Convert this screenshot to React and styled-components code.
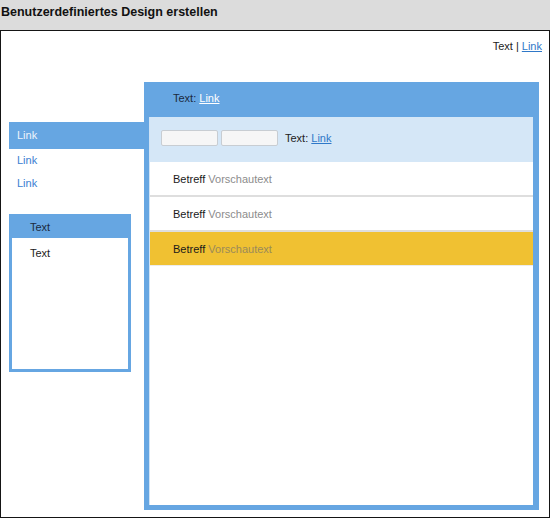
import styled, { createGlobalStyle } from 'styled-components';

/* Farben */
const blue = '#66a6e2';
const lightBlue = '#d5e7f7';
const yellow = '#f0c132';
const linkBlue = '#2f78c8';

const GlobalStyle = createGlobalStyle`
  html, body {
    margin: 0;
    padding: 0;
    background: #ffffff;
  }
  body {
    font-family: "Liberation Sans", Arial, sans-serif;
    font-size: 11px;
    color: #222222;
  }
`;

// Titelleiste
const TitleBar = styled.div`
  height: 30px;
  box-sizing: border-box;
  padding: 5px 0 0 1px;
  background: #dcdcdc;
  font-size: 12.5px;
  font-weight: bold;
  color: #111111;
`;

// Rahmen der Vorschau
const Frame = styled.div`
  box-sizing: border-box;
  width: 550px;
  height: 488px;
  border: 1px solid #151515;
  display: flex;
  flex-direction: column;
`;

const TopLinks = styled.div`
  height: 51px;
  box-sizing: border-box;
  padding: 9px 7px 0 0;
  text-align: right;
`;

const A = styled.a`
  color: ${(p) => p.$color || linkBlue};
  text-decoration: underline;
  cursor: pointer;
`;

const Body = styled.div`
  display: flex;
  align-items: flex-start;
  padding-left: 8px;
`;

// Seitenleiste
const Sidebar = styled.nav`
  width: 135px;
  margin-top: 40px;
  display: flex;
  flex-direction: column;
`;

const NavItem = styled.div`
  height: ${(p) => (p.$active ? '27px' : '23px')};
  line-height: ${(p) => (p.$active ? '27px' : '23px')};
  padding-left: 8px;
  background: ${(p) => (p.$active ? blue : 'transparent')};
  color: ${(p) => (p.$active ? '#eef4fb' : '#3a80d2')};
`;

const Box = styled.div`
  box-sizing: border-box;
  width: 122px;
  height: 158px;
  margin-top: 19px;
  border: 3px solid ${blue};
`;

const BoxHeader = styled.div`
  height: 21px;
  line-height: 20px;
  padding-left: 18px;
  background: ${blue};
  color: #1b2a3d;
`;

const BoxContent = styled.div`
  padding: 7px 0 0 18px;
  line-height: 16px;
`;

// Hauptbereich
const Main = styled.section`
  box-sizing: border-box;
  width: 395px;
  height: 428px;
  padding: 0 6px 5px 5px;
  background: ${blue};
  display: flex;
  flex-direction: column;
`;

const MainHeader = styled.div`
  height: 35px;
  line-height: 33px;
  padding-left: 24px;
  color: #1b2a3d;
`;

const Inner = styled.div`
  flex: 1;
  background: #ffffff;
  border-left: 1px solid #cfe3f6;
  display: flex;
  flex-direction: column;
`;

const Toolbar = styled.div`
  height: 45px;
  box-sizing: border-box;
  padding: 0 0 3px 11px;
  background: ${lightBlue};
  display: flex;
  align-items: center;
  gap: 3px;
`;

const Input = styled.input`
  box-sizing: border-box;
  width: 57px;
  height: 16px;
  margin: 0;
  padding: 0;
  border: 1px solid #c8cdd2;
  border-radius: 2px;
  background: #f6f6f6;
`;

const ToolbarText = styled.span`
  margin-left: 4px;
`;

const Row = styled.div`
  box-sizing: border-box;
  height: ${(p) => (p.$selected ? '34px' : '35px')};
  line-height: 35px;
  padding-left: 23px;
  background: ${(p) => (p.$selected ? yellow : '#ffffff')};
  border-bottom: ${(p) => (p.$selected ? '1px solid #ececec' : '2px solid #dedede')};
  overflow: hidden;
`;

const Subject = styled.span`
  color: #1a1a1a;
`;

const Preview = styled.span`
  color: ${(p) => (p.$selected ? '#9a8a5a' : '#8c8c8c')};
`;

const rows = [false, false, true];

const App = () => (
  <>
    <GlobalStyle />
    <TitleBar>Benutzerdefiniertes Design erstellen</TitleBar>
    <Frame>
      <TopLinks>
        Text | <A>Link</A>
      </TopLinks>
      <Body>
        <Sidebar>
          <NavItem $active>Link</NavItem>
          <NavItem>Link</NavItem>
          <NavItem>Link</NavItem>
          <Box>
            <BoxHeader>Text</BoxHeader>
            <BoxContent>Text</BoxContent>
          </Box>
        </Sidebar>
        <Main>
          <MainHeader>
            Text: <A $color="#ffffff">Link</A>
          </MainHeader>
          <Inner>
            <Toolbar>
              <Input />
              <Input />
              <ToolbarText>
                Text: <A>Link</A>
              </ToolbarText>
            </Toolbar>
            {rows.map((selected, index) => (
              <Row key={index} $selected={selected}>
                <Subject>Betreff</Subject> <Preview $selected={selected}>Vorschautext</Preview>
              </Row>
            ))}
          </Inner>
        </Main>
      </Body>
    </Frame>
  </>
);

export default App;
